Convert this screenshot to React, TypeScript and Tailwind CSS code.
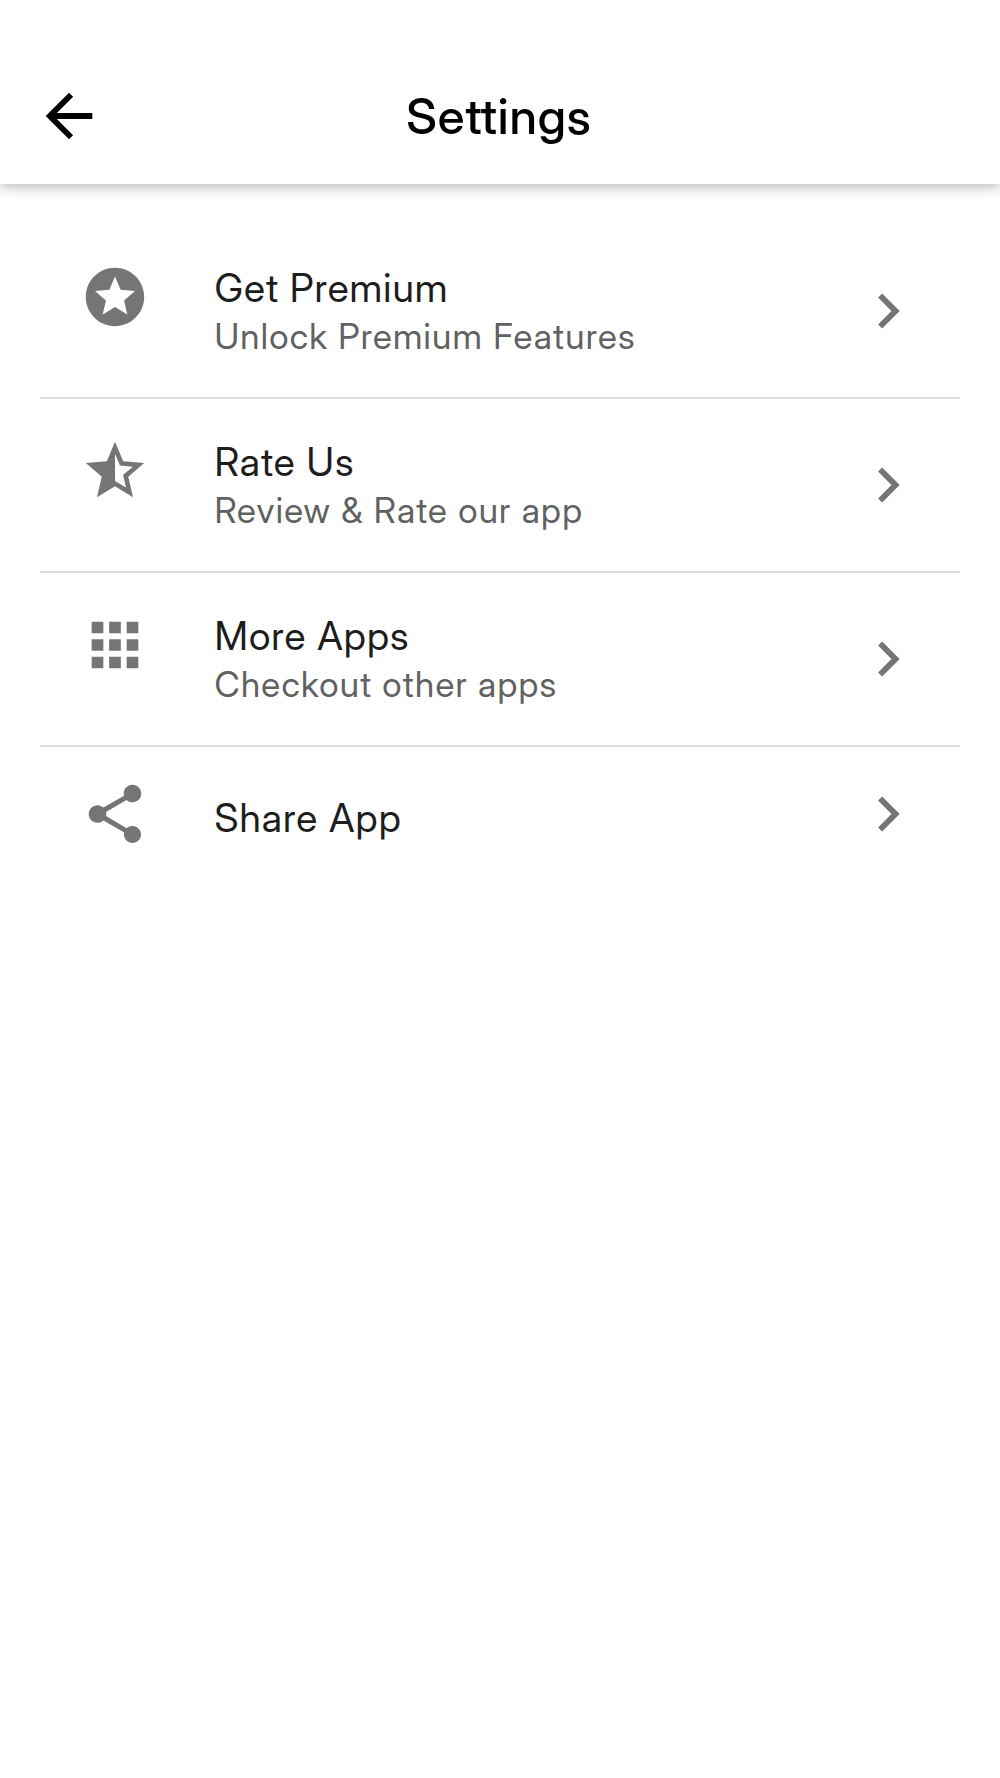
const icons = {
  stars: 'M11.99 2C6.47 2 2 6.48 2 12s4.47 10 9.99 10C17.52 22 22 17.52 22 12S17.52 2 11.99 2zm4.24 16L12 15.45 7.77 18l1.12-4.81-3.73-3.23 4.92-.42L12 5l1.92 4.53 4.92.42-3.73 3.23L16.23 18z',
  half: 'M22 9.24l-7.19-.62L12 2 9.19 8.63 2 9.24l5.46 4.73L5.82 21 12 17.27 18.18 21l-1.63-7.03L22 9.24zM12 15.4V6.1l1.71 4.04 4.38.38-3.32 2.88 1 4.28L12 15.4z',
  apps: 'M4 8h4V4H4v4zm6 12h4v-4h-4v4zm-6 0h4v-4H4v4zm0-6h4v-4H4v4zm6 0h4v-4h-4v4zm6-10v4h4V4h-4zm-6 4h4V4h-4v4zm6 6h4v-4h-4v4zm0 6h4v-4h-4v4z',
  share: 'M18 16.08c-.76 0-1.44.3-1.96.77L8.91 12.7c.05-.23.09-.46.09-.7s-.04-.47-.09-.7l7.05-4.11c.54.5 1.25.81 2.04.81 1.66 0 3-1.34 3-3s-1.34-3-3-3-3 1.34-3 3c0 .24.04.47.09.7L8.04 9.81C7.5 9.31 6.79 9 6 9c-1.66 0-3 1.34-3 3s1.34 3 3 3c.79 0 1.5-.31 2.04-.81l7.12 4.16c-.05.21-.08.43-.08.65 0 1.61 1.31 2.92 2.92 2.92s2.92-1.31 2.92-2.92-1.31-2.92-2.92-2.92z',
  chevron: 'M10 6L8.59 7.41 13.17 12l-4.58 4.59L10 18l6-6z',
  back: 'M20 11H7.83l5.59-5.59L12 4l-8 8 8 8 1.41-1.41L7.83 13H20v-2z',
};

const items = [
  { title: 'Get Premium', subtitle: 'Unlock Premium Features', icon: icons.stars },
  { title: 'Rate Us', subtitle: 'Review & Rate our app', icon: icons.half },
  { title: 'More Apps', subtitle: 'Checkout other apps', icon: icons.apps },
];

function Icon({ path, className }: { path: string; className: string }) {
  return (
    <svg viewBox="0 0 24 24" fill="currentColor" className={className} aria-hidden="true">
      <path d={path} />
    </svg>
  );
}

export default function App() {
  return (
    <div className="h-[1778px] w-[1000px] overflow-hidden bg-white font-['Inter_Display','Inter',sans-serif]">
      <header className="grid h-[184px] grid-cols-[138px_1fr_138px] items-end bg-white pb-[33px] shadow-[0_3px_12px_rgba(0,0,0,0.28)]">
        <button aria-label="Back" className="ml-[34px] h-[70px] w-[70px] text-black">
          <Icon path={icons.back} className="h-[70px] w-[70px]" />
        </button>
        <h1 className="mb-[4px] pr-[2px] text-center text-[49px] leading-[60px] font-medium tracking-[0.9px] text-black">Settings</h1>
      </header>
      <main className="mx-[40px] mt-[41px]">
        {items.map((item) => (
          <button key={item.title} className="flex h-[174px] w-full border-b-2 border-[#e0e0e0] pl-[40.4px] text-left">
            <Icon path={item.icon} className="mt-[37.4px] h-[70px] w-[70px] text-[#757575]" />
            <span className="ml-[64px] mt-[39px] flex flex-1 flex-col">
              <span className="text-[39px] leading-[48px] tracking-[1.05px] text-[#1d1d1d]">{item.title}</span>
              <span className="text-[35px] leading-[48px] tracking-[1.28px] text-[#616161]">{item.subtitle}</span>
            </span>
            <Icon path={icons.chevron} className="mr-[37.4px] mt-[51.4px] h-[70px] w-[70px] text-[#757575]" />
          </button>
        ))}
        <button className="flex h-[136px] w-full pl-[40.4px] text-left">
          <Icon path={icons.share} className="mt-[31.5px] h-[70px] w-[70px] text-[#757575]" />
          <span className="ml-[64px] mt-[47px] flex-1 text-[39px] leading-[48px] tracking-[1.05px] text-[#1d1d1d]">Share App</span>
          <Icon path={icons.chevron} className="mr-[37.4px] mt-[31.6px] h-[70px] w-[70px] text-[#757575]" />
        </button>
      </main>
    </div>
  );
}
